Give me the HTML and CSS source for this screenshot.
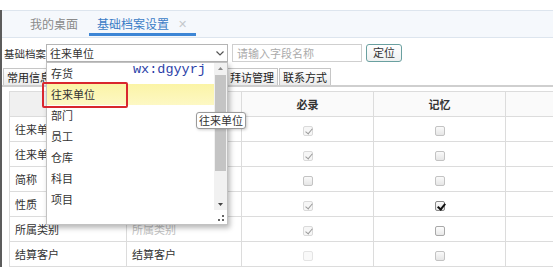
FILE: index.html
```html
<!DOCTYPE html>
<html lang="zh-CN">
<head>
<meta charset="utf-8">
<link rel="stylesheet" href="styles.css">
</head>
<body>
<div class="page">
  <div class="topstrip"></div>
  <div class="frame">
    <div class="tabbar">
      <div class="tab">我的桌面</div>
      <div class="tab active">基础档案设置<span class="close">✕</span></div>
    </div>
    <div class="toolbar">
      <span class="label">基础档案</span>
      <div class="select">往来单位
        <svg class="chev" width="8" height="5" viewBox="0 0 8 5"><polyline points="0.5,0.5 4,4 7.5,0.5" fill="none" stroke="#555" stroke-width="1.2"/></svg>
      </div>
      <div class="search">请输入字段名称</div>
      <div class="btn">定位</div>
    </div>
    <div class="subtabs">
      <div class="stab">常用信息</div>
      <div class="stab">财务信息</div>
      <div class="stab">信用信息</div>
      <div class="stab">收货人地址</div>
      <div class="stab">拜访管理</div>
      <div class="stab">联系方式</div>
    </div>
    <table class="grid">
      <colgroup><col class="c1"><col class="c2"><col class="c3"><col class="c4"><col class="c5"></colgroup>
      <tr class="head"><th class="h1">字段名称</th><th>显示名称</th><th>必录</th><th>记忆</th><th></th></tr>
      <tr><td>往来单位编码</td><td>往来单位编码</td><td class="ck"><span class="cb dis on"></span></td><td class="ck"><span class="cb"></span></td><td></td></tr>
      <tr><td>往来单位名称</td><td>往来单位名称</td><td class="ck"><span class="cb dis on"></span></td><td class="ck"><span class="cb"></span></td><td></td></tr>
      <tr><td>简称</td><td>简称</td><td class="ck"><span class="cb"></span></td><td class="ck"><span class="cb"></span></td><td></td></tr>
      <tr><td>性质</td><td>性质</td><td class="ck"><span class="cb dis on"></span></td><td class="ck"><span class="cb act on"></span></td><td></td></tr>
      <tr><td>所属类别</td><td class="ph">所属类别</td><td class="ck"><span class="cb dis on"></span></td><td class="ck"><span class="cb en"></span></td><td></td></tr>
      <tr><td>结算客户</td><td>结算客户</td><td class="ck"><span class="cb faint"></span></td><td class="ck"><span class="cb"></span></td><td></td></tr>
    </table>
  </div>

  <div class="dropdown">
    <div class="dd-body">
      <ul class="dd-list">
        <li>存货</li>
        <li class="sel">往来单位</li>
        <li>部门</li>
        <li>员工</li>
        <li>仓库</li>
        <li>科目</li>
        <li>项目</li>
      </ul>
      <div class="sbar">
        <svg class="arr" width="13" height="12" viewBox="0 0 13 12"><polygon points="4,7 9,7 6.5,4" fill="#888"/></svg>
        <div class="thumb"></div>
        <div class="track"></div>
        <svg class="arr" width="13" height="12" viewBox="0 0 13 12"><polygon points="4,5 9,5 6.5,8" fill="#444"/></svg>
      </div>
    </div>
    <div class="dd-foot">
      <svg width="6" height="6" viewBox="0 0 6 6"><rect x="4" y="0" width="2" height="2" fill="#666"/><rect x="0" y="4" width="2" height="2" fill="#666"/><rect x="4" y="4" width="2" height="2" fill="#666"/></svg>
    </div>
  </div>
  <div class="redbox"></div>
  <div class="watermark">wx:dgyyrj</div>
  <div class="tooltip">往来单位</div>
</div>
</body>
</html>
```

FILE: styles.css
```css
* { box-sizing: border-box; }
html, body { margin: 0; padding: 0; }
body {
  width: 553px;
  height: 267px;
  overflow: hidden;
  background: #fff;
  font-family: "Noto Sans CJK SC", "Noto Sans", sans-serif;
  font-size: 11px;
  color: #333;
}
.page { position: relative; width: 553px; height: 267px; overflow: hidden; }
.topstrip { height: 10px; background: #fff; }
.frame { border-left: 2px solid #5c5c5c; height: 257px; }

.tabbar {
  height: 28px;
  border-top: 1px solid #dde5ee;
  border-bottom: 1px solid #dde5ee;
  background: #f5f8fc;
  display: flex;
  padding-left: 17px;
}
.tab {
  display: flex;
  align-items: center;
  padding: 2px 11px 0;
  font-size: 12px;
  color: #8a8a8a;
  margin-bottom: 1px;
  border-bottom: 3px solid transparent;
}
.tab.active {
  color: #3a7cc6;
  border-bottom-color: #3d86d6;
  padding: 2px 9px 0 8px;
}
.close { color: #c4c8cc; font-size: 11px; margin-left: 9px; }

.toolbar {
  display: flex;
  align-items: center;
  height: 18px;
  margin-top: 6px;
  padding-left: 2px;
}
.label { font-size: 10.5px; width: 42px; color: #333; white-space: nowrap; }
.select {
  position: relative;
  width: 182px;
  height: 18px;
  border: 1px solid #b5b5b5;
  padding-left: 3px;
  line-height: 16px;
  background: #fff;
}
.chev { position: absolute; right: 3px; top: 6px; }
.search {
  width: 130px;
  height: 18px;
  margin-left: 4px;
  border: 1px solid #cfcfcf;
  color: #aaa;
  padding-left: 4px;
  line-height: 16px;
}
.btn {
  width: 36px;
  height: 18px;
  margin-left: 4px;
  border: 1px solid #6aa0a0;
  border-radius: 3px;
  text-align: center;
  line-height: 15px;
  background: linear-gradient(#ffffff, #eef0f0);
  color: #333;
}

.subtabs {
  display: flex;
  gap: 1px;
  margin-top: 6px;
  padding-left: 1px;
  border-bottom: 2px solid #cfcfcf;
}
.stab {
  height: 17px;
  line-height: 16px;
  padding: 0 3px;
  border: 1px solid #c6c6c6;
  border-bottom: none;
  background: linear-gradient(#ffffff, #ebebeb);
  color: #222;
  white-space: nowrap;
}

.grid {
  margin-top: 4px;
  margin-left: 7px;
  border-collapse: collapse;
  table-layout: fixed;
  width: 600px;
}
.c1 { width: 117px; }
.c2 { width: 115px; }
.c3 { width: 132px; }
.c4 { width: 132px; }
.c5 { width: 104px; }
.grid th, .grid td {
  border: 1px solid #dcdcdc;
  height: 25px;
  padding: 0 0 0 5px;
  white-space: nowrap;
  overflow: hidden;
  text-align: left;
  font-weight: normal;
}
.grid tr.head th { background: #fafafa; text-align: center; padding: 0; font-weight: bold; color: #333; }
.grid tr.head th.h1 { background: #f0f0f0; }
.grid td.ph { color: #c0c0c0; }
.grid td.ck { text-align: center; padding: 0; }

.cb {
  display: inline-block;
  width: 10px;
  height: 10px;
  border: 1px solid #c3c3c3;
  border-radius: 2px;
  background: linear-gradient(#fafafa, #e6e6e6);
  vertical-align: middle;
  position: relative;
}
.cb.dis { border-color: #dadada; background: #f6f6f6; }
.cb.faint { border-color: #e4e4e4; background: #f9f9f9; }
.cb.en { border-color: #a9a9a9; background: linear-gradient(#fdfdfd, #e8e8e8); }
.cb.act { border-color: #8a8a8a; }
.cb.on::after {
  content: "";
  position: absolute;
  left: 3px;
  top: 0px;
  width: 3px;
  height: 6px;
  border-right: 1.6px solid #9a9a9a;
  border-bottom: 1.6px solid #9a9a9a;
  transform: rotate(40deg);
}
.cb.act.on::after { border-color: #111; border-width: 0 2px 2px 0; }

.dropdown {
  position: absolute;
  left: 46px;
  top: 62px;
  width: 182px;
  height: 163px;
  background: #fff;
  border: 1px solid #c2c2c2;
  box-shadow: 2px 3px 5px rgba(0, 0, 0, 0.28);
  display: flex;
  flex-direction: column;
}
.dd-body { display: flex; height: 147px; }
.dd-list {
  list-style: none;
  margin: 0;
  padding: 0;
  flex: 1;
}
.dd-list li {
  height: 21px;
  line-height: 21px;
  padding-left: 4px;
  color: #333;
}
.dd-list li.sel { background: linear-gradient(#fbf4a6, #fdf8c4); }
.sbar {
  width: 13px;
  background: #f1f1f1;
  display: flex;
  flex-direction: column;
}
.sbar .arr { display: block; flex: none; }
.thumb { height: 96px; margin: 0 1px; background: #c4c4c4; flex: none; }
.track { flex: 1; }
.dd-foot {
  flex: 1;
  display: flex;
  justify-content: flex-end;
  align-items: flex-end;
  padding: 0 3px 3px 0;
}

.redbox {
  position: absolute;
  left: 42px;
  top: 82px;
  width: 86px;
  height: 26px;
  border: 2px solid #d9272e;
  border-radius: 2px;
}
.watermark {
  position: absolute;
  left: 133px;
  top: 62px;
  font-family: "Liberation Mono", "DejaVu Sans Mono", monospace;
  font-size: 13.5px;
  color: #2c3fa8;
}
.tooltip {
  position: absolute;
  left: 196px;
  top: 112px;
  width: 50px;
  height: 17px;
  background: #fff;
  border: 1px solid #9a9a9a;
  border-radius: 3px;
  box-shadow: 1px 1px 3px rgba(0, 0, 0, 0.2);
  text-align: center;
  line-height: 15px;
  color: #333;
}
```
